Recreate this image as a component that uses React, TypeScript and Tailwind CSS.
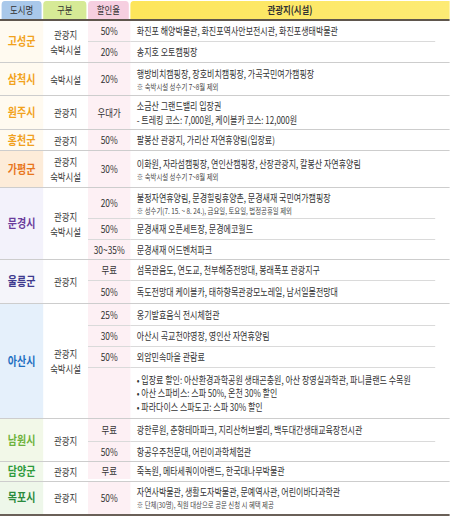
import React from "react";

type Sub = { rate: string; h: string; lines: string[]; note?: string; bullets?: boolean };
type Row = { city: string; color: string; bg: string; kind: string[]; subs: Sub[] };

const rows: Row[] = [
  {
    city: "고성군",
    color: "text-[#f2a21c]",
    bg: "bg-[#fffaf0]",
    kind: ["관광지", "숙박시설"],
    subs: [
      { rate: "50%", h: "h-[20px]", lines: ["화진포 해양박물관, 화진포역사안보전시관, 화진포생태박물관"] },
      { rate: "20%", h: "h-[21px]", lines: ["송지호 오토캠핑장"] },
    ],
  },
  {
    city: "삼척시",
    color: "text-[#f2a21c]",
    bg: "bg-[#fffaf0]",
    kind: ["숙박시설"],
    subs: [
      {
        rate: "20%",
        h: "h-[32px]",
        lines: ["행방비치캠핑장, 장호비치캠핑장, 가곡국민여가캠핑장"],
        note: "※ 숙박시설 성수기 7~8월 제외",
      },
    ],
  },
  {
    city: "원주시",
    color: "text-[#f2a21c]",
    bg: "bg-[#fffaf0]",
    kind: ["관광지"],
    subs: [
      {
        rate: "우대가",
        h: "h-[33px]",
        lines: ["소금산 그랜드밸리 입장권", "- 트레킹 코스: 7,000원, 케이블카 코스: 12,000원"],
      },
    ],
  },
  {
    city: "홍천군",
    color: "text-[#f0a01e]",
    bg: "bg-[#fffaf0]",
    kind: ["관광지"],
    subs: [{ rate: "50%", h: "h-[20px]", lines: ["팔봉산 관광지, 가리산 자연휴양림(입장료)"] }],
  },
  {
    city: "가평군",
    color: "text-[#e8761d]",
    bg: "bg-[#fdecd9]",
    kind: ["관광지", "숙박시설"],
    subs: [
      {
        rate: "30%",
        h: "h-[36px]",
        lines: ["이화원, 자라섬캠핑장, 연인산캠핑장, 산장관광지, 칼봉산 자연휴양림"],
        note: "※ 숙박시설 성수기 7~8월 제외",
      },
    ],
  },
  {
    city: "문경시",
    color: "text-[#6a3c9c]",
    bg: "bg-[#f3f2fb]",
    kind: ["관광지", "숙박시설"],
    subs: [
      {
        rate: "20%",
        h: "h-[30px]",
        lines: ["불정자연휴양림, 문경힐링휴양촌, 문경새재 국민여가캠핑장"],
        note: "※ 성수기(7. 15. ~ 8. 24.), 금요일, 토요일, 법정공휴일 제외",
      },
      { rate: "50%", h: "h-[21px]", lines: ["문경새재 오픈세트장, 문경에코월드"] },
      { rate: "30~35%", h: "h-[20px]", lines: ["문경새재 어드벤처파크"] },
    ],
  },
  {
    city: "울릉군",
    color: "text-[#3e3a8e]",
    bg: "bg-[#f5f5fa]",
    kind: ["관광지"],
    subs: [
      { rate: "무료", h: "h-[20px]", lines: ["섬목관음도, 연도교, 천부해중전망대, 봉래폭포 관광지구"] },
      { rate: "50%", h: "h-[23px]", lines: ["독도전망대 케이블카, 태하향목관광모노레일, 남서일몰전망대"] },
    ],
  },
  {
    city: "아산시",
    color: "text-[#1d6fc1]",
    bg: "bg-[#e5f0fb]",
    kind: ["관광지", "숙박시설"],
    subs: [
      { rate: "25%", h: "h-[21px]", lines: ["옹기발효음식 전시체험관"] },
      { rate: "30%", h: "h-[21px]", lines: ["아산시 곡교천야영장, 영인산 자연휴양림"] },
      { rate: "50%", h: "h-[21px]", lines: ["외암민속마을 관람료"] },
      {
        rate: "",
        h: "h-[51px]",
        bullets: true,
        lines: [
          "• 입장료 할인: 아산환경과학공원 생태곤충원, 아산 장영실과학관, 파니클랜드 수목원",
          "• 아산 스파비스: 스파 50%, 온천 30% 할인",
          "• 파라다이스 스파도고: 스파 30% 할인",
        ],
      },
    ],
  },
  {
    city: "남원시",
    color: "text-[#6db23b]",
    bg: "bg-[#f2f8e8]",
    kind: ["관광지"],
    subs: [
      { rate: "무료", h: "h-[22px]", lines: ["광한루원, 춘향테마파크, 지리산허브밸리, 백두대간생태교육장전시관"] },
      { rate: "50%", h: "h-[20px]", lines: ["항공우주천문대, 어린이과학체험관"] },
    ],
  },
  {
    city: "담양군",
    color: "text-[#2e9a3b]",
    bg: "bg-[#f1f8ea]",
    kind: ["관광지"],
    subs: [{ rate: "무료", h: "h-[17px]", lines: ["죽녹원, 메타세쿼이아랜드, 한국대나무박물관"] }],
  },
  {
    city: "목포시",
    color: "text-[#2a8b3d]",
    bg: "bg-[#eef7ea]",
    kind: ["관광지"],
    subs: [
      {
        rate: "50%",
        h: "h-[32px]",
        lines: ["자연사박물관, 생활도자박물관, 문예역사관, 어린이바다과학관"],
        note: "※ 단체(30명), 직원 대상으로 공문 신청 시 혜택 제공",
      },
    ],
  },
];

export default function App() {
  return (
    <div className="w-[450px] h-[516px] overflow-hidden bg-white font-['Noto_Sans_CJK_KR','Noto_Sans',sans-serif] text-[#333]">
      {/* the source table is set in a condensed face, so the whole table is drawn wide and squeezed */}
      <div className="w-[562px] origin-top-left scale-x-[0.8]">
        {/* Header */}
        <div className="flex h-[19px] items-end">
          <div className="w-[54px] shrink-0 px-[2px] h-[18px]">
            <div className="h-full rounded-t-[4px] bg-[#a9c8ea] flex items-center justify-center text-[10.5px]">
              도시명
            </div>
          </div>
          <div className="w-[56px] shrink-0 pr-[2px] h-[18px]">
            <div className="h-full rounded-t-[4px] bg-[#d6ea96] flex items-center justify-center text-[10.5px]">
              구분
            </div>
          </div>
          <div className="w-[53px] shrink-0 pr-[2px] h-[18px]">
            <div className="h-full rounded-t-[4px] bg-[#f6cfe0] flex items-center justify-center text-[10.5px]">
              할인율
            </div>
          </div>
          <div className="flex-1 h-[18px] rounded-tl-[4px] bg-linear-to-r from-[#fde55a] to-[#fdeb74] flex items-center justify-center text-[10.5px] font-bold">
            관광지(시설)
          </div>
        </div>
        <div className="h-[2px] bg-[#5f564d]" />

        {/* Body */}
        {rows.map((row, i) => (
          <div key={row.city} className={`flex ${i > 0 ? "border-t border-[#cdcdcd]" : ""}`}>
            <div className={`w-[54px] shrink-0 flex items-center justify-center ${row.bg}`}>
              <span className={`text-[12.5px] font-bold ${row.color}`}>{row.city}</span>
            </div>
            <div className="w-[56px] shrink-0 flex flex-col items-center justify-center text-[10.5px] leading-[15px] text-[#3a3a3a]">
              {row.kind.map((k) => (
                <span key={k}>{k}</span>
              ))}
            </div>
            <div className="flex-1 flex flex-col">
              {row.subs.map((s, j) => (
                <div key={j} className={`flex ${s.h}`}>
                  <div
                    className={`w-[53px] shrink-0 bg-[#fdf0f4] flex items-center justify-center text-[10.5px] ${
                      j > 0 ? "border-t border-[#dadada]" : ""
                    }`}
                  >
                    {s.rate}
                  </div>
                  <div
                    className={`flex-1 flex flex-col justify-center pl-[8px] mr-[18px] whitespace-nowrap ${
                      j > 0 ? "border-t border-[#dadada]" : ""
                    }`}
                  >
                    {s.lines.map((l) => (
                      <span key={l} className={`text-[10px] ${s.bullets ? "leading-[13.5px]" : "leading-[14px]"}`}>
                        {l}
                      </span>
                    ))}
                    {s.note && <span className="text-[8px] leading-[11px] text-[#444]">{s.note}</span>}
                  </div>
                </div>
              ))}
            </div>
          </div>
        ))}
        <div className="h-[2px] bg-[#6a6058]" />
      </div>
    </div>
  );
}
